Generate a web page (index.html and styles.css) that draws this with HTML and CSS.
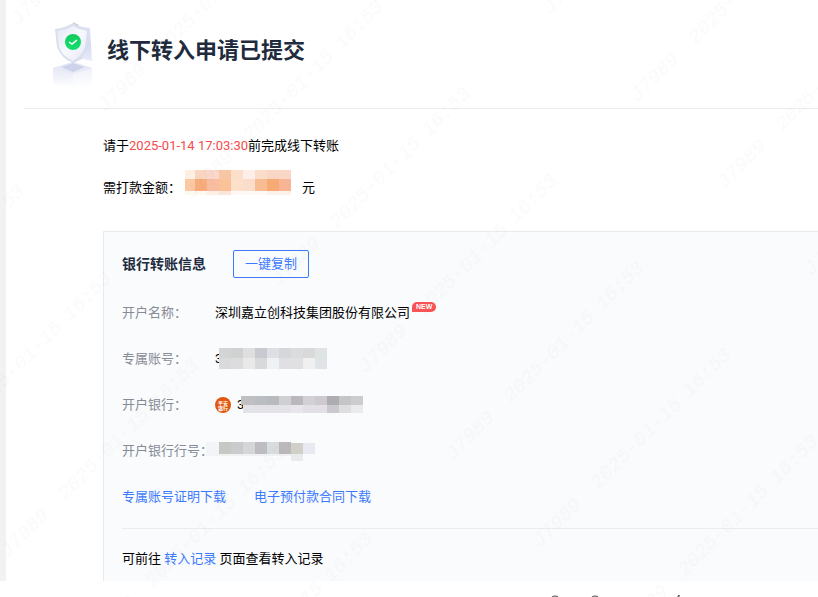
FILE: index.html
```html
<!DOCTYPE html>
<html lang="zh-CN">
<head>
  <meta charset="UTF-8">
  <meta name="viewport" content="width=device-width, initial-scale=1.0">
  <title>线下转入申请已提交</title>
  <link rel="stylesheet" href="styles.css">
</head>
<body>
  <main class="page">
    <header class="head">
      <svg class="shield" viewBox="0 0 40 66" width="40" height="66" aria-hidden="true">
        <defs>
          <linearGradient id="face" x1="0" y1="0" x2="1" y2="1">
            <stop offset="0" stop-color="#e4e8f4"/>
            <stop offset=".5" stop-color="#f8f9fd"/>
            <stop offset="1" stop-color="#e6e9f6"/>
          </linearGradient>
          <linearGradient id="side" x1="0" y1="0" x2="0" y2="1">
            <stop offset="0" stop-color="#e3e8f4"/>
            <stop offset=".55" stop-color="#d6dbf2"/>
            <stop offset="1" stop-color="#eceffa"/>
          </linearGradient>
          <linearGradient id="fade" x1="0" y1="0" x2="0" y2="1">
            <stop offset="0" stop-color="#dde1f2"/>
            <stop offset="1" stop-color="#fff"/>
          </linearGradient>
          <linearGradient id="green" x1="0" y1="0" x2="0" y2="1">
            <stop offset="0" stop-color="#13c95c"/>
            <stop offset="1" stop-color="#14e070"/>
          </linearGradient>
        </defs>
        <path d="M0 46 20 40 39 46 39 62 20 66 0 62z" fill="url(#fade)"/>
        <path d="M0 46 20 40 39 46 20 52z" fill="#e6eaf6"/>
        <path d="M8 45 20 41 32 45 20 50z" fill="#cdd3ea"/>
        <path d="M20 52 39 46 39 61 20 66z" fill="#fff" opacity=".4"/>
        <path d="M20 0 25 4 37 6 39 39 30 37 20 41z" fill="url(#side)"/>
        <path d="M20 0 26 3 25 5 20 4z" fill="#ced1d5"/>
        <path d="M20 41 29 36 28 32 20 38z" fill="#ced1da"/>
        <path d="M20 1Q12 6 2 7L4 25Q8 36 20 41 32 36 34 25L36 7Q27 6 20 1z" fill="#d9dfee"/>
        <path d="M20 4Q13 8 4 9L6 25Q9 34 20 39 29 34 32 25L34 9Q27 8 20 4z" fill="url(#face)"/>
        <circle cx="20" cy="20" r="8" fill="url(#green)"/>
        <path d="M16 20 19 22 24 18" fill="none" stroke="#fff" stroke-width="1.5"/>
      </svg>
      <h1>线下转入申请已提交</h1>
    </header>

    <section class="content">
      <p class="line">请于<span class="deadline">2025-01-14 17:03:30</span>前完成线下转账</p>
      <p class="line amount">
        <span>需打款金额：</span>
        <svg class="mosaic" width="113" height="22" aria-hidden="true">
          <g transform="translate(0 -7)">
            <rect width="10" height="9" fill="#fdf0e2"/><rect x="10" width="12" height="9" fill="#fad6c1"/><rect x="22" width="12" height="9" fill="#f9d7ca"/><rect x="34" width="12" height="9" fill="#f8c6a5"/><rect x="46" width="12" height="9" fill="#fcdfca"/><rect x="58" width="12" height="9" fill="#fdeeea"/><rect x="70" width="12" height="9" fill="#fbdcc8"/><rect x="82" width="24" height="9" fill="#fad6c6"/>
            <rect y="9" width="10" height="12" fill="#fbcaa4"/><rect x="10" y="9" width="12" height="12" fill="#f6ac7c"/><rect x="22" y="9" width="12" height="12" fill="#f8bda0"/><rect x="34" y="9" width="12" height="12" fill="#f9c298"/><rect x="46" y="9" width="12" height="12" fill="#fde0c9"/><rect x="58" y="9" width="12" height="12" fill="#fbddcc"/><rect x="70" y="9" width="12" height="12" fill="#f8bc92"/><rect x="82" y="9" width="12" height="12" fill="#f7aa74"/><rect x="94" y="9" width="12" height="12" fill="#f8b596"/>
            <rect y="21" width="22" height="4" fill="#fef8f3"/><rect x="22" y="21" width="12" height="4" fill="#fdeee7"/><rect x="34" y="21" width="12" height="4" fill="#fce6db"/><rect x="46" y="21" width="36" height="4" fill="#fef9f5"/><rect x="82" y="21" width="24" height="4" fill="#fdf1eb"/>
          </g>
        </svg>
        <span>元</span>
      </p>

      <div class="panel">
        <div class="panel-head">
          <h2>银行转账信息</h2>
          <button type="button" class="copy">一键复制</button>
        </div>

        <dl class="info">
          <div class="row">
            <dt>开户名称：</dt>
            <dd>深圳嘉立创科技集团股份有限公司<span class="new">NEW</span></dd>
          </div>
          <div class="row">
            <dt>专属账号：</dt>
            <dd>
              <span>3</span>
              <svg class="mosaic over" width="108" height="22" aria-hidden="true">
                <rect width="12" height="10" fill="#d3d5d5"/><rect x="12" width="12" height="10" fill="#d0d2d1"/><rect x="24" width="12" height="10" fill="#e0dfdf"/><rect x="36" width="12" height="10" fill="#cac9d2"/><rect x="48" width="12" height="10" fill="#dedfe2"/><rect x="60" width="12" height="10" fill="#d6d7da"/><rect x="72" width="12" height="10" fill="#dbdcdd"/><rect x="84" width="12" height="10" fill="#d8d9d9"/><rect x="96" width="12" height="10" fill="#dee4e4"/>
                <rect y="10" width="12" height="11" fill="#d9dadc"/><rect x="12" y="10" width="12" height="11" fill="#dcdcdf"/><rect x="24" y="10" width="12" height="11" fill="#e9e9ea"/><rect x="36" y="10" width="12" height="11" fill="#d8d9da"/><rect x="48" y="10" width="12" height="11" fill="#eff2f4"/><rect x="60" y="10" width="24" height="11" fill="#e0e0e2"/><rect x="84" y="10" width="12" height="11" fill="#f0f0f1"/><rect x="96" y="10" width="12" height="11" fill="#e1e4e6"/>
              </svg>
            </dd>
          </div>
          <div class="row">
            <dt>开户银行：</dt>
            <dd>
              <svg class="bank" viewBox="0 0 16 16" width="16" height="16" role="img" aria-label="平安银行">
                <circle cx="8" cy="8" r="8" fill="#e2570f"/>
                <text x="8" y="8" text-anchor="middle">平安</text>
                <text x="8" y="13" text-anchor="middle">银行</text>
              </svg>
              <span>3</span>
              <svg class="mosaic over" width="122" height="18" aria-hidden="true">
                <rect width="14" height="9" fill="#c0c0c3"/><rect x="14" width="12" height="9" fill="#babec2"/><rect x="26" width="12" height="9" fill="#b8bbbc"/><rect x="38" width="12" height="9" fill="#cfcfd4"/><rect x="50" width="12" height="9" fill="#bbb7bc"/><rect x="62" width="12" height="9" fill="#d1d0d5"/><rect x="74" width="12" height="9" fill="#cdc9ce"/><rect x="86" width="12" height="9" fill="#acacb1"/><rect x="98" width="12" height="9" fill="#c5c5c7"/><rect x="110" width="12" height="9" fill="#cccbd0"/>
                <rect x="2" y="9" width="48" height="8" fill="#e3e2e6"/><rect x="50" y="9" width="12" height="8" fill="#e9e5ec"/><rect x="62" y="9" width="24" height="8" fill="#e2e0e6"/><rect x="86" y="9" width="12" height="8" fill="#cacace"/><rect x="98" y="9" width="12" height="8" fill="#dedee1"/><rect x="110" y="9" width="12" height="8" fill="#ebebed"/>
              </svg>
            </dd>
          </div>
          <div class="row">
            <dt>开户银行行号：</dt>
            <dd>
              <svg class="mosaic" width="100" height="18" aria-hidden="true">
                <rect x="-9" width="13" height="14" fill="#f3f4f5"/>
                <rect x="4" width="12" height="12" fill="#c6c8c6"/><rect x="16" width="12" height="12" fill="#c9cbcd"/><rect x="28" width="12" height="12" fill="#d5d6d7"/><rect x="40" width="12" height="12" fill="#bcbcc1"/><rect x="52" width="12" height="12" fill="#d8dcdf"/><rect x="64" width="12" height="12" fill="#bbb8bc"/><rect x="76" y="1" width="12" height="11" fill="#d0cfc8"/><rect x="88" y="1" width="12" height="11" fill="#e7eaf1"/>
                <rect x="4" y="12" width="72" height="2" fill="#f0f1f3"/><rect x="76" y="12" width="12" height="7" fill="#eaebed"/>
              </svg>
            </dd>
          </div>
        </dl>

        <div class="downloads">
          <a href="#">专属账号证明下载</a>
          <a href="#">电子预付款合同下载</a>
        </div>

        <p class="tip">可前往 <a href="#">转入记录</a> 页面查看转入记录</p>
      </div>
    </section>
  </main>

  <!-- tops of the next line, cut off by the fold -->
  <svg class="cut" height="16" aria-hidden="true">
    <g fill="none" stroke="#444" stroke-width="1">
      <circle cx="555" cy="20" r="5"/>
      <circle cx="595" cy="20" r="5"/>
      <path d="M675 20 679 14V24"/>
    </g>
  </svg>

  <svg class="watermark" width="100%" height="100%" aria-hidden="true">
    <defs>
      <pattern id="mark" width="384" height="123" patternUnits="userSpaceOnUse" patternTransform="translate(453 461) rotate(-45) translate(0 -60)">
        <text x="0" y="60">J7989</text>
        <text x="82" y="60">2025-01-15</text>
        <text x="212" y="60">16:53</text>
      </pattern>
    </defs>
    <rect width="100%" height="100%" fill="url(#mark)"/>
  </svg>
</body>
</html>
```
FILE: styles.css
```css
body {
  margin: 0;
  position: relative;
  min-height: 100vh;
  overflow: hidden;
  background-color: #fff;
  color: #000;
  font-family: Roboto, "Noto Sans CJK SC", sans-serif;
  font-size: 13px;
  line-height: 22px;
}

h1, h2, p, dl, dd {
  margin: 0;
}

a {
  color: #3d7aff;
  text-decoration: none;
}

.page {
  border-left: 6px solid #f1f2f4;
  padding-left: 18px;
}

.head {
  display: flex;
  gap: 14px;
  padding: 22px 0 20px 29px;
  border-bottom: 1px solid #ececee;
}

.head h1 {
  color: #212b3d;
  font-size: 22px;
  line-height: 58px;
}

.content {
  padding: 26px 0 0 79px;
}

.line {
  margin-bottom: 20px;
}

.deadline {
  color: #f54a4c;
}

.amount {
  display: flex;
  align-items: center;
  gap: 4px;
  margin-bottom: 32px;
}

.mosaic {
  flex: none;
  overflow: visible;
}

.panel {
  padding: 18px 0 0 18px;
  border: 1px solid #e8eaec;
  border-width: 1px 0 0 1px;
  background-color: #fafbfd;
}

.panel-head {
  display: flex;
  align-items: center;
  gap: 27px;
  margin-bottom: 12px;
}

.panel-head h2 {
  color: #212b3d;
  font-size: 14px;
}

.copy {
  width: 76px;
  height: 28px;
  padding: 0;
  border: 1px solid #3d7aff;
  border-radius: 2px;
  background: none;
  color: #3d7aff;
  font: inherit;
}

.row {
  display: flex;
  align-items: center;
  height: 46px;
}

.row dt {
  width: 93px;
  flex: none;
  color: #868b96;
}

.row dd {
  display: flex;
  align-items: center;
}

/* covers the first digit's right half */
.over {
  margin-left: -3px;
}

.bank {
  margin-right: 6px;
}

.bank text {
  fill: #fff;
  font-size: 5px;
  font-weight: bold;
}

.new {
  margin: 0 0 12px 2px;
  padding: 0 4px;
  border-radius: 5px 5px 5px 0;
  background-color: #f95355;
  color: #fff;
  font-family: "Liberation Sans", sans-serif;
  font-size: 7px;
  font-weight: bold;
  line-height: 10px;
}

.downloads {
  display: flex;
  align-items: center;
  gap: 28px;
  height: 46px;
  margin-bottom: 8px;
}

.tip {
  padding: 19px 0 11px;
  border-top: 1px solid #ebecee;
}

.cut {
  display: block;
  width: 100%;
}

.watermark {
  position: absolute;
  top: 0;
  left: 0;
  pointer-events: none;
}

.watermark text {
  fill: #000;
  fill-opacity: 0.02;
  font-family: "Liberation Mono", monospace;
  font-size: 20px;
  font-style: italic;
}
```
